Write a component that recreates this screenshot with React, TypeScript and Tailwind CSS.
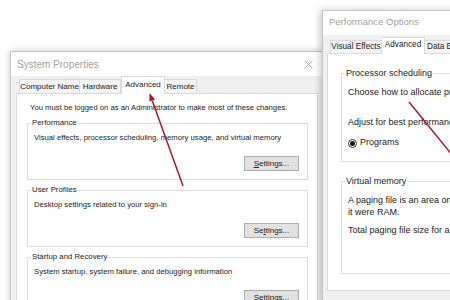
import * as React from 'react';

const left = "font-['Liberation_Sans',Arial,sans-serif]";

function Settings({ u }: { u: number }) {
  const t = 'Settings...';
  return (
    <div className="ml-auto mt-[13px] w-[55px] h-[15px] bg-[#e1e1e1] border border-[#adadad] flex items-center justify-center text-[8px] leading-none text-[#222]">
      {t.slice(0, u)}
      <span className="underline">{t[u]}</span>
      {t.slice(u + 1)}
    </div>
  );
}

function Group({ label, text, u }: { label: string; text: string; u: number }) {
  return (
    <fieldset className="mt-[5px] border border-[#dcdcdc] pb-[8px]">
      <legend className="ml-[3px] px-[1px] leading-[10px] text-[7.8px]">{label}</legend>
      <div className="pl-[6px] pr-[8px]">
        <div className="mt-[5px] leading-[10px]">{text}</div>
        <Settings u={u} />
      </div>
    </fieldset>
  );
}

function SystemProperties() {
  return (
    <div className={`absolute left-[10px] top-[51px] w-[313px] h-[270px] bg-[#f0f0f0] border border-[#c4c4c4] shadow-[0_0_7px_rgba(0,0,0,0.22)] flex flex-col text-[7.7px] text-[#1a1a1a] ${left}`}>
      <div className="h-[24px] bg-white flex items-center justify-between pl-[6px] pr-[9px]">
        <span className="text-[10px] text-[#a0a0a0]">System Properties</span>
        <svg width="9" height="9" viewBox="0 0 9 9" className="stroke-[#9a9a9a]">
          <path d="M0.5 0.5 L8.5 8.5 M8.5 0.5 L0.5 8.5" strokeWidth="0.9" />
        </svg>
      </div>
      <div className="h-[17px] flex items-end pl-[8px] text-[8px] whitespace-nowrap">
        <div className="w-[61px] h-[14px] border border-b-0 border-[#d9d9d9] bg-[#f4f4f4] flex items-center justify-center">Computer Name</div>
        <div className="w-[41px] h-[14px] border border-b-0 border-l-0 border-[#d9d9d9] bg-[#f4f4f4] flex items-center justify-center">Hardware</div>
        <div className="relative z-10 -mb-px w-[44px] h-[18px] border border-b-0 border-[#d9d9d9] bg-white flex items-center justify-center pb-[2px]">Advanced</div>
        <div className="w-[32px] h-[14px] border border-b-0 border-l-0 border-[#d9d9d9] bg-[#f4f4f4] flex items-center justify-center">Remote</div>
      </div>
      <div className="ml-[5px] mr-[4px] flex-1 bg-white border border-[#d9d9d9] pt-[9px] pl-[10px] pr-[9px]">
        <div className="pl-[3px] leading-[10px]">You must be logged on as an Administrator to make most of these changes.</div>
        <Group label="Performance" text="Visual effects, processor scheduling, memory usage, and virtual memory" u={0} />
        <Group label="User Profiles" text="Desktop settings related to your sign-in" u={2} />
        <Group label="Startup and Recovery" text="System startup, system failure, and debugging information" u={2} />
      </div>
    </div>
  );
}

function PerformanceOptions() {
  return (
    <div className={`absolute left-[322px] top-[10px] w-[420px] h-[310px] bg-[#f0f0f0] border border-[#c4c4c4] shadow-[-2px_0_7px_rgba(0,0,0,0.22)] flex flex-col text-[9px] text-[#1a1a1a] whitespace-nowrap ${left}`}>
      <div className="h-[24px] bg-white flex items-center pl-[6px] pb-[2px]">
        <span className="text-[9.5px] text-[#a0a0a0]">Performance Options</span>
      </div>
      <div className="h-[18px] flex items-end pl-[7px] text-[8.2px]">
        <div className="w-[52px] h-[13px] border border-b-0 border-[#d9d9d9] bg-[#f4f4f4] flex items-center justify-center">Visual Effects</div>
        <div className="relative z-10 -mb-px w-[43px] h-[17px] border border-b-0 border-l-0 border-[#d9d9d9] bg-white flex items-center justify-center pb-[2px]">Advanced</div>
        <div className="w-[120px] h-[13px] border border-b-0 border-l-0 border-[#d9d9d9] bg-[#f4f4f4] flex items-center pl-[2px]">Data Execution Prevention</div>
      </div>
      <div className="ml-[4px] w-[400px] h-[238px] bg-white border border-[#d9d9d9] pt-[13px] pl-[13px]">
        <fieldset className="w-[370px] border border-[#dcdcdc] pb-[12px]">
          <legend className="ml-[3px] px-[1px] leading-[12px]">Processor scheduling</legend>
          <div className="pl-[6px]">
            <div className="mt-[7px] leading-[12px]">Choose how to allocate processor resources.</div>
            <div className="mt-[18px] leading-[12px]">Adjust for best performance of:</div>
            <div className="mt-[9px] h-[12px] flex items-center gap-[3px]">
              <span className="w-[9px] h-[9px] rounded-full border border-[#333] flex items-center justify-center">
                <span className="w-[5px] h-[5px] rounded-full bg-[#1a1a1a]" />
              </span>
              Programs
              <span className="ml-[90px] w-[9px] h-[9px] rounded-full border border-[#333]" />
              Background services
            </div>
          </div>
        </fieldset>
        <fieldset className="mt-[13px] w-[370px] h-[99px] border border-[#dcdcdc]">
          <legend className="ml-[3px] px-[1px] leading-[12px]">Virtual memory</legend>
          <div className="pl-[6px]">
            <div className="mt-[7px] leading-[12px]">
              <div>A paging file is an area on the hard disk that Windows uses as if</div>
              <div>it were RAM.</div>
            </div>
            <div className="mt-[6px] leading-[12px]">Total paging file size for all drives:</div>
          </div>
        </fieldset>
      </div>
    </div>
  );
}

function Arrows() {
  return (
    <svg className="absolute inset-0 z-20 pointer-events-none" width="450" height="300" viewBox="0 0 450 300">
      <line x1="183" y1="186" x2="152.2" y2="100.5" stroke="#a8182b" strokeWidth="1.5" />
      <polygon points="149.5,93 155,99.5 149.4,101.5" fill="#a8182b" />
      <line x1="409" y1="102" x2="470" y2="177" stroke="#a8182b" strokeWidth="1.5" />
    </svg>
  );
}

export default function App() {
  return (
    <div className="relative w-[450px] h-[300px] overflow-hidden bg-white">
      <SystemProperties />
      <PerformanceOptions />
      <Arrows />
    </div>
  );
}
